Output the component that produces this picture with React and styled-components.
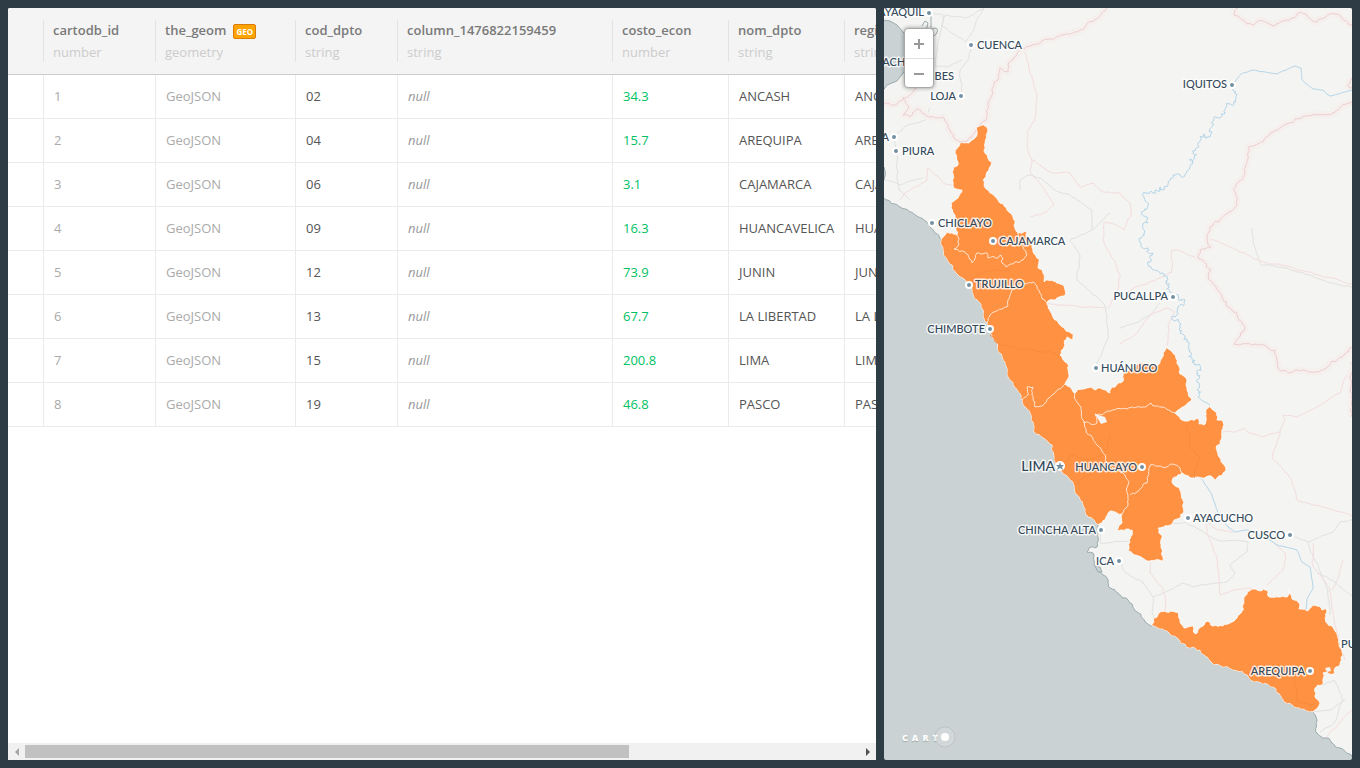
import React, { useState, useEffect, useRef } from 'react';
import styled, { createGlobalStyle } from 'styled-components';

const GlobalStyle = createGlobalStyle`
  * {
    box-sizing: border-box;
  }
  body {
    margin: 0;
    background: #2e3c45;
    font-family: "Open Sans", "Liberation Sans", sans-serif;
    font-size: 13px;
  }
`;

const Page = styled.main`
  display: grid;
  grid-template-columns: 217fr 117fr;
  gap: 8px;
  height: 100vh;
  padding: 8px;
`;

const TablePanel = styled.section`
  display: flex;
  flex-direction: column;
  min-width: 0;
  background: #ffffff;
  border-radius: 2px 2px 0 0;
  overflow: hidden;
`;

const TableScroll = styled.div`
  flex: 1;
  min-height: 0;
  overflow: auto;
  scrollbar-width: none;
`;

const DataTable = styled.table`
  width: 1199px;
  table-layout: fixed;
  border-collapse: separate;
  border-spacing: 0;
`;

const HeadCell = styled.th`
  width: ${props => props.$width};
  height: 67px;
  padding: 0;
  background: #f4f4f4;
  border-bottom: 1px solid #cccccc;
  text-align: left;
  font-weight: normal;
`;

const HeadInner = styled.div`
  height: 42px;
  padding-left: 9px;
  border-left: 1px solid #e3e3e3;
`;

const ColumnName = styled.div`
  display: flex;
  align-items: center;
  gap: 7px;
  height: 20px;
  font-weight: 600;
  color: #7a7a7a;
`;

const ColumnType = styled.div`
  line-height: 24px;
  color: #cccccc;
`;

const GeoBadge = styled.span`
  height: 15px;
  margin-top: 2px;
  padding: 0 2px;
  border: 1px solid #d97d08;
  border-radius: 2px;
  background: #ffa300;
  color: #ffffff;
  font-size: 8px;
  font-weight: 700;
  line-height: 14px;
`;

const cellColors = {
  id: '#aaaaaa',
  geom: '#aaaaaa',
  empty: '#999999',
  number: '#00c264',
  string: '#555555',
};

const Cell = styled.td`
  height: 44px;
  padding: 0 0 2px 10px;
  border-left: 1px solid #ebebeb;
  border-bottom: 1px solid #ebebeb;
  color: ${props => cellColors[props.$kind]};
  font-style: ${props => (props.$kind === 'empty' ? 'italic' : 'normal')};
  white-space: nowrap;
`;

const RowHandle = styled.td`
  border-bottom: 1px solid #ebebeb;
`;

const ScrollBar = styled.div`
  display: flex;
  align-items: center;
  height: 17px;
  background: #f1f1f1;
`;

const ScrollTrack = styled.div`
  flex: 1;
  height: 13px;
`;

const ScrollThumb = styled.div`
  height: 13px;
  background: #c1c1c1;
`;

const ScrollButton = styled.button`
  display: flex;
  align-items: center;
  justify-content: center;
  width: 17px;
  height: 17px;
  padding: 0;
  border: 0;
  background: none;
  color: ${props => (props.disabled ? '#a3a3a3' : '#505050')};
`;

const MapPanel = styled.section`
  position: relative;
  min-width: 0;
  border-radius: 2px;
  background: #cad2d3;
  overflow: hidden;
`;

const MapCanvas = styled.svg`
  display: block;
  width: 100%;
  height: 100%;
`;

const PlaceName = styled.text`
  font-family: Lato, "Open Sans", sans-serif;
  font-size: ${props => (props.$big ? '14px' : '11px')};
  font-weight: 500;
  fill: #34495a;
  stroke: rgba(255, 255, 255, 0.8);
  stroke-width: 3px;
  stroke-linejoin: round;
  paint-order: stroke;
`;

const ZoomControl = styled.div`
  position: absolute;
  top: 20px;
  left: 20px;
  width: 30px;
  display: flex;
  flex-direction: column;
  border: 1px solid #a8a8a8;
  border-radius: 4px;
  background: #ffffff;
  box-shadow: 0 0 4px rgba(0, 0, 0, 0.4);
`;

const ZoomButton = styled.button`
  display: flex;
  align-items: center;
  justify-content: center;
  height: 29px;
  padding: 1px 0 0;
  border: 0;
  background: none;
  color: #999999;
  cursor: pointer;
  & + & {
    border-top: 1px solid #e0e0e0;
  }
`;

const CartoLogo = styled.a`
  position: absolute;
  left: 18px;
  bottom: 12px;
  display: flex;
  align-items: center;
  height: 22px;
  color: #ffffff;
  font-family: "Open Sans", sans-serif;
  font-size: 9px;
  font-weight: 800;
  letter-spacing: 4px;
  text-decoration: none;
  text-shadow: 0 1px 1px rgba(0, 0, 0, 0.2);
`;

const LogoDisc = styled.svg`
  width: 22px;
  height: 22px;
  margin-left: -8px;
`;

const columns = [
  { name: 'cartodb_id', type: 'number', width: '112px' },
  { name: 'the_geom', type: 'geometry', width: '140px' },
  { name: 'cod_dpto', type: 'string', width: '102px' },
  { name: 'column_1476822159459', type: 'string', width: '215px' },
  { name: 'costo_econ', type: 'number', width: '116px' },
  { name: 'nom_dpto', type: 'string', width: '116px' },
  { name: 'region', type: 'string', width: 'auto' },
];

const rows = [
  { id: 1, cod: '02', costo: '34.3', name: 'ANCASH' },
  { id: 2, cod: '04', costo: '15.7', name: 'AREQUIPA' },
  { id: 3, cod: '06', costo: '3.1', name: 'CAJAMARCA' },
  { id: 4, cod: '09', costo: '16.3', name: 'HUANCAVELICA' },
  { id: 5, cod: '12', costo: '73.9', name: 'JUNIN' },
  { id: 6, cod: '13', costo: '67.7', name: 'LA LIBERTAD' },
  { id: 7, cod: '15', costo: '200.8', name: 'LIMA' },
  { id: 8, cod: '19', costo: '46.8', name: 'PASCO' },
];

// ---- map geometry ----

const parse = text => text.split(' ').map(pair => pair.split(',').map(Number));

// Offset depends on the midpoint only, so shared borders stay shared.
const noise = (x, y) => {
  const n = Math.sin(x * 12.9898 + y * 78.233) * 43758.5453;
  return n - Math.floor(n) - 0.5;
};

const split = (a, b, amount) => {
  const length = Math.hypot(b[0] - a[0], b[1] - a[1]);
  if (length < 3) return [b];
  const mx = (a[0] + b[0]) / 2;
  const my = (a[1] + b[1]) / 2;
  const reach = Math.min(length, 8) * amount;
  const mid = [mx + noise(mx, my) * reach, my + noise(my, mx) * reach];
  return [...split(a, mid, amount), ...split(mid, b, amount)];
};

const line = (text, amount = 0.4) => {
  const pts = parse(text);
  const out = [pts[0]];
  for (let i = 1; i < pts.length; i++) out.push(...split(pts[i - 1], pts[i], amount));
  return 'M' + out.map(p => p[0].toFixed(1) + ' ' + p[1].toFixed(1)).join('L');
};

const reverse = text => text.split(' ').reverse().join(' ');

const coastNorth = '884,198 900,207 910,212 923,219 930,227 935,233 941,240';
const coastMiddle =
  '941,240 943,250 949,263 958,275 967,283 972,290 974,298 981,307 983,317 987,323 992,337 997,343 999,353 1005,362 1007,372 1013,385 1022,400 1030,413 1033,422 1033,431 1043,438 1052,445 1054,457 1058,470 1070,480 1075,493 1083,505 1088,517 1098,525';
const coastIca =
  '1098,525 1098,537 1097,547 1089,548 1087,552 1093,553 1094,565 1103,575 1110,588 1128,600 1137,612 1145,622 1152,626';
const coastArequipa =
  '1152,626 1177,638 1180,643 1195,648 1212,663 1228,667 1247,675 1255,682 1267,684 1277,693 1283,700 1297,708 1313,712';
const coastSouth = '1313,712 1317,720 1317,733 1330,740 1340,748 1352,757';
const coast = [coastNorth, coastMiddle, coastIca, coastArequipa, coastSouth].join(' ');

const centralRegions =
  '941,240 947,232 952,233 957,235 957,223 955,215 951,208 951,203 958,198 962,190 953,185 953,167 958,165 955,153 960,143 970,142 976,137 977,127 982,125 987,127 987,133 985,143 985,153 992,162 987,172 983,180 988,190 998,200 1007,210 1013,217 1015,228 1018,233 1027,232 1027,238 1032,242 1033,252 1039,259 1038,268 1043,273 1044,282 1053,281 1063,285 1065,290 1064,296 1053,300 1047,303 1053,317 1062,327 1073,334 1073,340 1067,337 1064,347 1060,355 1067,363 1069,375 1065,384 1075,393 1083,389 1090,387 1095,390 1100,388 1110,393 1112,387 1122,382 1123,373 1140,362 1155,365 1160,363 1163,353 1167,346 1173,353 1177,362 1180,374 1187,381 1187,390 1192,399 1183,407 1175,413 1182,420 1198,418 1199,424 1204,425 1206,410 1209,406 1217,412 1217,420 1223,422 1222,437 1216,448 1220,458 1226,470 1217,478 1215,481 1208,476 1193,478 1182,473 1173,478 1173,484 1180,487 1184,502 1184,512 1180,518 1168,526 1158,528 1162,538 1163,561 1147,561 1128,551 1132,530 1117,530 1122,523 1122,514 1110,511 1098,525';

const arequipaRegion =
  '1152,626 1154,618 1160,612 1177,612 1180,620 1184,628 1193,625 1196,634 1203,626 1207,621 1212,626 1230,623 1237,618 1243,610 1244,597 1253,589 1267,590 1268,596 1278,597 1287,597 1289,588 1292,599 1299,603 1299,609 1307,611 1313,605 1322,610 1326,608 1327,623 1333,627 1338,638 1342,652 1340,665 1336,667 1334,674 1323,673 1322,685 1315,688 1315,697 1320,703 1313,712';

const innerBorders = [
  '957,235 959,245 954,249 965,252 972,263 977,253 987,253 988,258 998,258 1001,255 1002,263 1006,267 1013,264 1023,260 1027,255 1023,247 1017,233',
  '987,323 990,315 1007,307 1008,300 1015,288 1022,283 1033,282 1040,293 1047,303',
  '1022,400 1028,395 1027,387 1033,387 1032,395 1035,402 1035,407 1045,403 1052,395 1065,384',
  '1075,393 1079,405 1083,420 1086,432 1097,445 1105,460 1123,473 1128,485 1128,495 1128,503 1122,514',
  '1083,422 1097,423 1095,414 1102,415 1108,411 1127,409 1143,407 1151,403 1162,407 1175,413',
  '1130,495 1147,483 1150,465 1162,467 1172,464 1180,468 1182,473',
];

const countryBorders = [
  '884,104 897,104 917,88',
  '903,97 909,107 903,115 910,117 918,109 930,117 943,117 948,128 960,142 972,137 980,125 986,120 987,110 992,95 998,80 1000,68 1008,72 1008,65 1023,49 1077,32 1107,8',
  '1238,8 1234,15 1247,24 1263,21 1273,26 1292,18 1300,12 1317,22 1335,14 1352,25',
  '1352,102 1340,108 1333,113 1320,115 1295,119 1273,132 1263,142 1248,147 1245,172 1234,190 1237,205 1228,213 1210,227 1207,238 1211,247 1200,250 1198,258 1211,270 1208,277 1218,290 1228,307 1237,313 1245,328 1234,344 1255,344 1275,350 1281,371 1300,371 1320,371 1337,360 1352,347',
  '1352,78 1348,86 1352,88',
  '1352,362 1352,417',
];

const wildRivers = [
  '1233,83 1235,100 1227,103 1220,118 1210,137 1198,143 1193,152 1190,167 1183,177 1173,175 1167,187 1150,192 1144,197 1145,210 1148,223 1140,242 1153,253 1153,270 1167,277 1172,293 1185,300 1173,316 1180,333 1190,350 1192,362 1199,364 1197,390 1198,397',
];

const calmRivers = [
  '1352,90 1330,96 1323,90 1313,89 1302,80 1301,68 1295,66 1277,74 1253,70 1241,74 1233,83',
  '1198,397 1210,405',
  '1200,477 1212,495 1218,513 1228,527 1235,532 1248,530 1270,540 1277,545 1297,550 1302,562 1310,567 1313,588 1307,600 1306,610',
];

const pinkRoads = [
  '1025,49 1027,60 1033,80 1037,95 1035,117 1027,132 1028,150 1032,160 1050,172 1070,173 1080,187 1093,183 1103,192 1120,193',
  '1120,193 1130,203 1131,215 1124,230 1116,225 1104,222 1103,240 1112,258 1120,275 1117,292 1108,308',
  '1032,160 1030,172 1045,190 1054,205 1044,213 1030,217',
  '1128,292 1140,286 1160,278 1172,272 1171,250 1178,250 1198,258',
  '1207,238 1260,261 1352,284',
  '900,200 905,193 927,180 928,168 945,184 955,187',
  '1047,303 1065,305 1085,307 1105,308',
  '1120,344 1135,335 1150,315 1168,308 1175,312 1168,325 1167,346',
  '1222,432 1235,432 1244,428 1250,433 1263,437 1280,432 1285,420 1283,415 1297,417 1317,407 1340,393 1343,383 1350,370',
  '1280,432 1272,458 1292,480 1297,500 1313,505 1352,516',
  '1207,517 1207,533 1217,557 1220,595 1233,590 1252,588',
  '1207,522 1217,530 1233,533',
  '1270,540 1285,553 1283,570 1267,585',
  '1313,543 1312,563 1330,588 1334,620 1345,660',
  '1343,560 1338,578 1332,590',
  '1150,562 1150,573 1162,587 1166,600 1165,612',
  '1327,737 1340,722 1352,710',
];

const greyRoads = [
  '984,8 975,25 972,32 966,42 942,26 945,15 965,18 984,8',
  '971,45 968,60 960,70 962,85 961,96',
  '935,67 950,66 962,60',
  '930,108 925,120 905,126 895,137 896,150 899,190 910,200',
  '1020,190 1020,180 1028,175 1040,178 1055,190 1075,198 1092,210 1092,230 1110,213',
  '1092,230 1070,240 1080,255 1077,280 1100,300 1106,308 1108,335 1097,365',
  '1120,328 1135,323 1150,315 1160,303',
  '1252,228 1254,245 1261,265 1285,268 1310,275 1330,283 1352,287',
  '1120,562 1125,572 1143,582 1153,597 1183,583 1193,587 1227,582 1235,573 1230,565 1247,552 1248,542',
  '1167,525 1185,522 1200,530 1217,540 1248,542',
  '1101,530 1100,543 1130,540',
  '1153,597 1152,612 1154,620',
  '1290,535 1308,542 1333,532 1340,522 1352,520',
  '1308,542 1317,563 1328,590 1330,615',
  '1317,572 1335,582 1352,596',
  '1322,685 1334,680 1343,700 1335,722 1320,732',
  '930,12 943,15 941,30 937,50 935,67',
  '923,178 900,185 884,180',
  '1312,712 1330,710 1345,700',
];

// Roads that run under the filled regions.
const coveredRoads = [
  '967,285 985,272 1010,270',
  '990,335 1000,345 1020,350 1045,352 1060,355',
  '1060,465 1070,455 1085,460 1105,455 1110,435',
  '1186,425 1190,445 1200,457 1195,470 1194,478',
  '1296,672 1297,700 1315,705',
  '1075,485 1100,470',
];

const places = [
  { name: 'GUAYAQUIL', x: 924, y: 16, anchor: 'end', dot: [929, 13] },
  { name: 'CUENCA', x: 977, y: 49, dot: [971, 45] },
  { name: 'MACHALA', x: 926, y: 66, anchor: 'end' },
  { name: 'TUMBES', x: 954, y: 80, anchor: 'end' },
  { name: 'LOJA', x: 956, y: 100, anchor: 'end', dot: [961, 96] },
  { name: 'SULLANA', x: 889, y: 141, anchor: 'end', dot: [894, 137] },
  { name: 'PIURA', x: 902, y: 155, dot: [896, 151] },
  { name: 'CHICLAYO', x: 938, y: 227, dot: [932, 223] },
  { name: 'CAJAMARCA', x: 999, y: 245, dot: [993, 241] },
  { name: 'TRUJILLO', x: 975, y: 288, dot: [969, 285] },
  { name: 'CHIMBOTE', x: 985, y: 333, anchor: 'end', dot: [990, 329] },
  { name: 'PUCALLPA', x: 1168, y: 300, anchor: 'end', dot: [1173, 297] },
  { name: 'IQUITOS', x: 1227, y: 88, anchor: 'end', dot: [1232, 85] },
  { name: 'HUÁNUCO', x: 1101, y: 372, dot: [1096, 368] },
  { name: 'HUANCAYO', x: 1137, y: 471, anchor: 'end', dot: [1142, 467] },
  { name: 'AYACUCHO', x: 1193, y: 522, dot: [1188, 518] },
  { name: 'CHINCHA ALTA', x: 1096, y: 534, anchor: 'end', dot: [1101, 530] },
  { name: 'CUSCO', x: 1285, y: 539, anchor: 'end', dot: [1290, 535] },
  { name: 'ICA', x: 1114, y: 565, anchor: 'end', dot: [1119, 561] },
  { name: 'AREQUIPA', x: 1305, y: 675, anchor: 'end', dot: [1310, 671] },
  { name: 'PUNO', x: 1341, y: 648 },
  { name: 'LIMA', x: 1055, y: 471, anchor: 'end', big: true },
];

const Lines = ({ items, amount, ...rest }) => (
  <g fill="none" {...rest}>
    {items.map(item => <path key={item} d={line(item, amount)} />)}
  </g>
);

const PeruMap = () => (
  <MapCanvas viewBox="884 8 468 752" preserveAspectRatio="xMinYMin slice" role="img" aria-label="Map of Peru">
    <path d={line(coast) + 'L1900 1200V-300H884Z'} fill="#f4f4f2" />
    <path d="M882 20L890 21L897 25L904 33L910 40V66L904 72L900 77L897 81L887 85L882 92Z" fill="#cad2d3" stroke="#9aaaad" />
    <path d="M922 26l3-5 3 2-2 8M931 13v15M932 29q7-3 5 4l-4 4" fill="none" stroke="#9aaaad" strokeWidth="1" />
    <path d="M884 167q3 6 0 13" fill="#cad2d3" stroke="#9aaaad" />
    <path d={line(coast)} fill="none" stroke="#9aaaad" strokeWidth="1" />
    <path d="M1095 566l5 1 2 5-4 0z" fill="#cad2d3" stroke="#9aaaad" />
    <Lines items={greyRoads} stroke="#e0e1e0" strokeWidth="1" amount={0.2} />
    <Lines items={pinkRoads} stroke="#f3dcdc" strokeWidth="1" amount={0.2} />
    <Lines items={countryBorders} stroke="#f5f0ee" strokeWidth="7" strokeLinejoin="round" />
    <Lines items={countryBorders} stroke="#edccce" strokeWidth="1" />
    <Lines items={calmRivers} stroke="#b3d4e8" strokeWidth="1" amount={0.1} />
    <Lines items={wildRivers} stroke="#b3d4e8" strokeWidth="1" amount={0.9} />
    <g fill="#ff9142" stroke="#ffffff" strokeOpacity="0.8" strokeWidth="1" strokeLinejoin="round">
      <path d={line(centralRegions + ' ' + reverse(coastMiddle)) + 'Z'} />
      <path d={line(arequipaRegion + ' ' + reverse(coastArequipa)) + 'Z'} />
    </g>
    <Lines items={coveredRoads} stroke="#f88b3d" strokeWidth="1" />
    <Lines items={innerBorders} stroke="#ffe6d3" strokeWidth="1" />
    <path d="M1095 414L1105 417L1107 422L1101 424Z" fill="#f4f4f2" />
    <path d="M1325 668l5-1 1 4-4 1z" fill="#f4f4f2" />
    {places.map(place => (
      <g key={place.name}>
        {place.dot && (
          <circle cx={place.dot[0]} cy={place.dot[1]} r="3" fill="#7390a3" stroke="#ffffff" strokeWidth="2" />
        )}
        <PlaceName x={place.x} y={place.y} textAnchor={place.anchor} $big={place.big}>
          {place.name}
        </PlaceName>
      </g>
    ))}
    <circle cx="1060" cy="466" r="5" fill="#ffffff" />
    <path d="M1060 462l1 3h3l-2 2 1 3-3-2-3 2 1-3-2-2h3z" fill="#7390a3" />
  </MapCanvas>
);

const Zoomer = () => (
  <ZoomControl>
    <ZoomButton type="button" aria-label="Zoom in">
      <svg width="10" height="10" viewBox="0 0 10 10">
        <path d="M0 5H10M5 0V10" stroke="currentColor" strokeWidth="2" />
      </svg>
    </ZoomButton>
    <ZoomButton type="button" aria-label="Zoom out">
      <svg width="10" height="10" viewBox="0 0 10 10">
        <path d="M0 5H10" stroke="currentColor" strokeWidth="2" />
      </svg>
    </ZoomButton>
  </ZoomControl>
);

const Dataset = () => {
  const scroller = useRef(null);
  const [bar, setBar] = useState({ left: 0, size: 72, end: false });

  const measure = () => {
    const el = scroller.current;
    setBar({
      left: (el.scrollLeft / el.scrollWidth) * 100,
      size: (el.clientWidth / el.scrollWidth) * 100,
      end: el.scrollLeft + el.clientWidth >= el.scrollWidth,
    });
  };

  useEffect(() => {
    measure();
    window.addEventListener('resize', measure);
    return () => window.removeEventListener('resize', measure);
  }, []);

  const scrollBy = left => scroller.current.scrollBy({ left });

  return (
    <TablePanel>
      <TableScroll ref={scroller} onScroll={measure}>
        <DataTable>
          <thead>
            <tr>
              <HeadCell $width="35px" />
              {columns.map(column => (
                <HeadCell key={column.name} $width={column.width} scope="col">
                  <HeadInner>
                    <ColumnName>
                      {column.name}
                      {column.name === 'the_geom' && <GeoBadge>GEO</GeoBadge>}
                    </ColumnName>
                    <ColumnType>{column.type}</ColumnType>
                  </HeadInner>
                </HeadCell>
              ))}
            </tr>
          </thead>
          <tbody>
            {rows.map(row => (
              <tr key={row.id}>
                <RowHandle />
                <Cell $kind="id">{row.id}</Cell>
                <Cell $kind="geom">GeoJSON</Cell>
                <Cell $kind="string">{row.cod}</Cell>
                <Cell $kind="empty">null</Cell>
                <Cell $kind="number">{row.costo}</Cell>
                <Cell $kind="string">{row.name}</Cell>
                <Cell $kind="string">{row.name}</Cell>
              </tr>
            ))}
          </tbody>
        </DataTable>
      </TableScroll>
      <ScrollBar>
        <ScrollButton type="button" aria-label="Scroll left" disabled={bar.left === 0} onClick={() => scrollBy(-80)}>
          <svg width="4" height="8" viewBox="0 0 4 8"><path d="M4 0V8L0 4Z" fill="currentColor" /></svg>
        </ScrollButton>
        <ScrollTrack>
          <ScrollThumb style={{ width: `${bar.size}%`, marginLeft: `${bar.left}%` }} />
        </ScrollTrack>
        <ScrollButton type="button" aria-label="Scroll right" disabled={bar.end} onClick={() => scrollBy(80)}>
          <svg width="4" height="8" viewBox="0 0 4 8"><path d="M0 0V8L4 4Z" fill="currentColor" /></svg>
        </ScrollButton>
      </ScrollBar>
    </TablePanel>
  );
};

const App = () => (
  <>
    <GlobalStyle />
    <Page>
      <Dataset />
      <MapPanel>
        <PeruMap />
        <Zoomer />
        <CartoLogo href="#carto">
          CART
          <LogoDisc viewBox="0 0 22 22" aria-hidden="true">
            <circle cx="11" cy="11" r="10" fill="rgba(255,255,255,0.15)" stroke="rgba(0,0,0,0.08)" />
            <circle cx="11" cy="11" r="4" fill="#ffffff" />
          </LogoDisc>
        </CartoLogo>
      </MapPanel>
    </Page>
  </>
);

export default App;
